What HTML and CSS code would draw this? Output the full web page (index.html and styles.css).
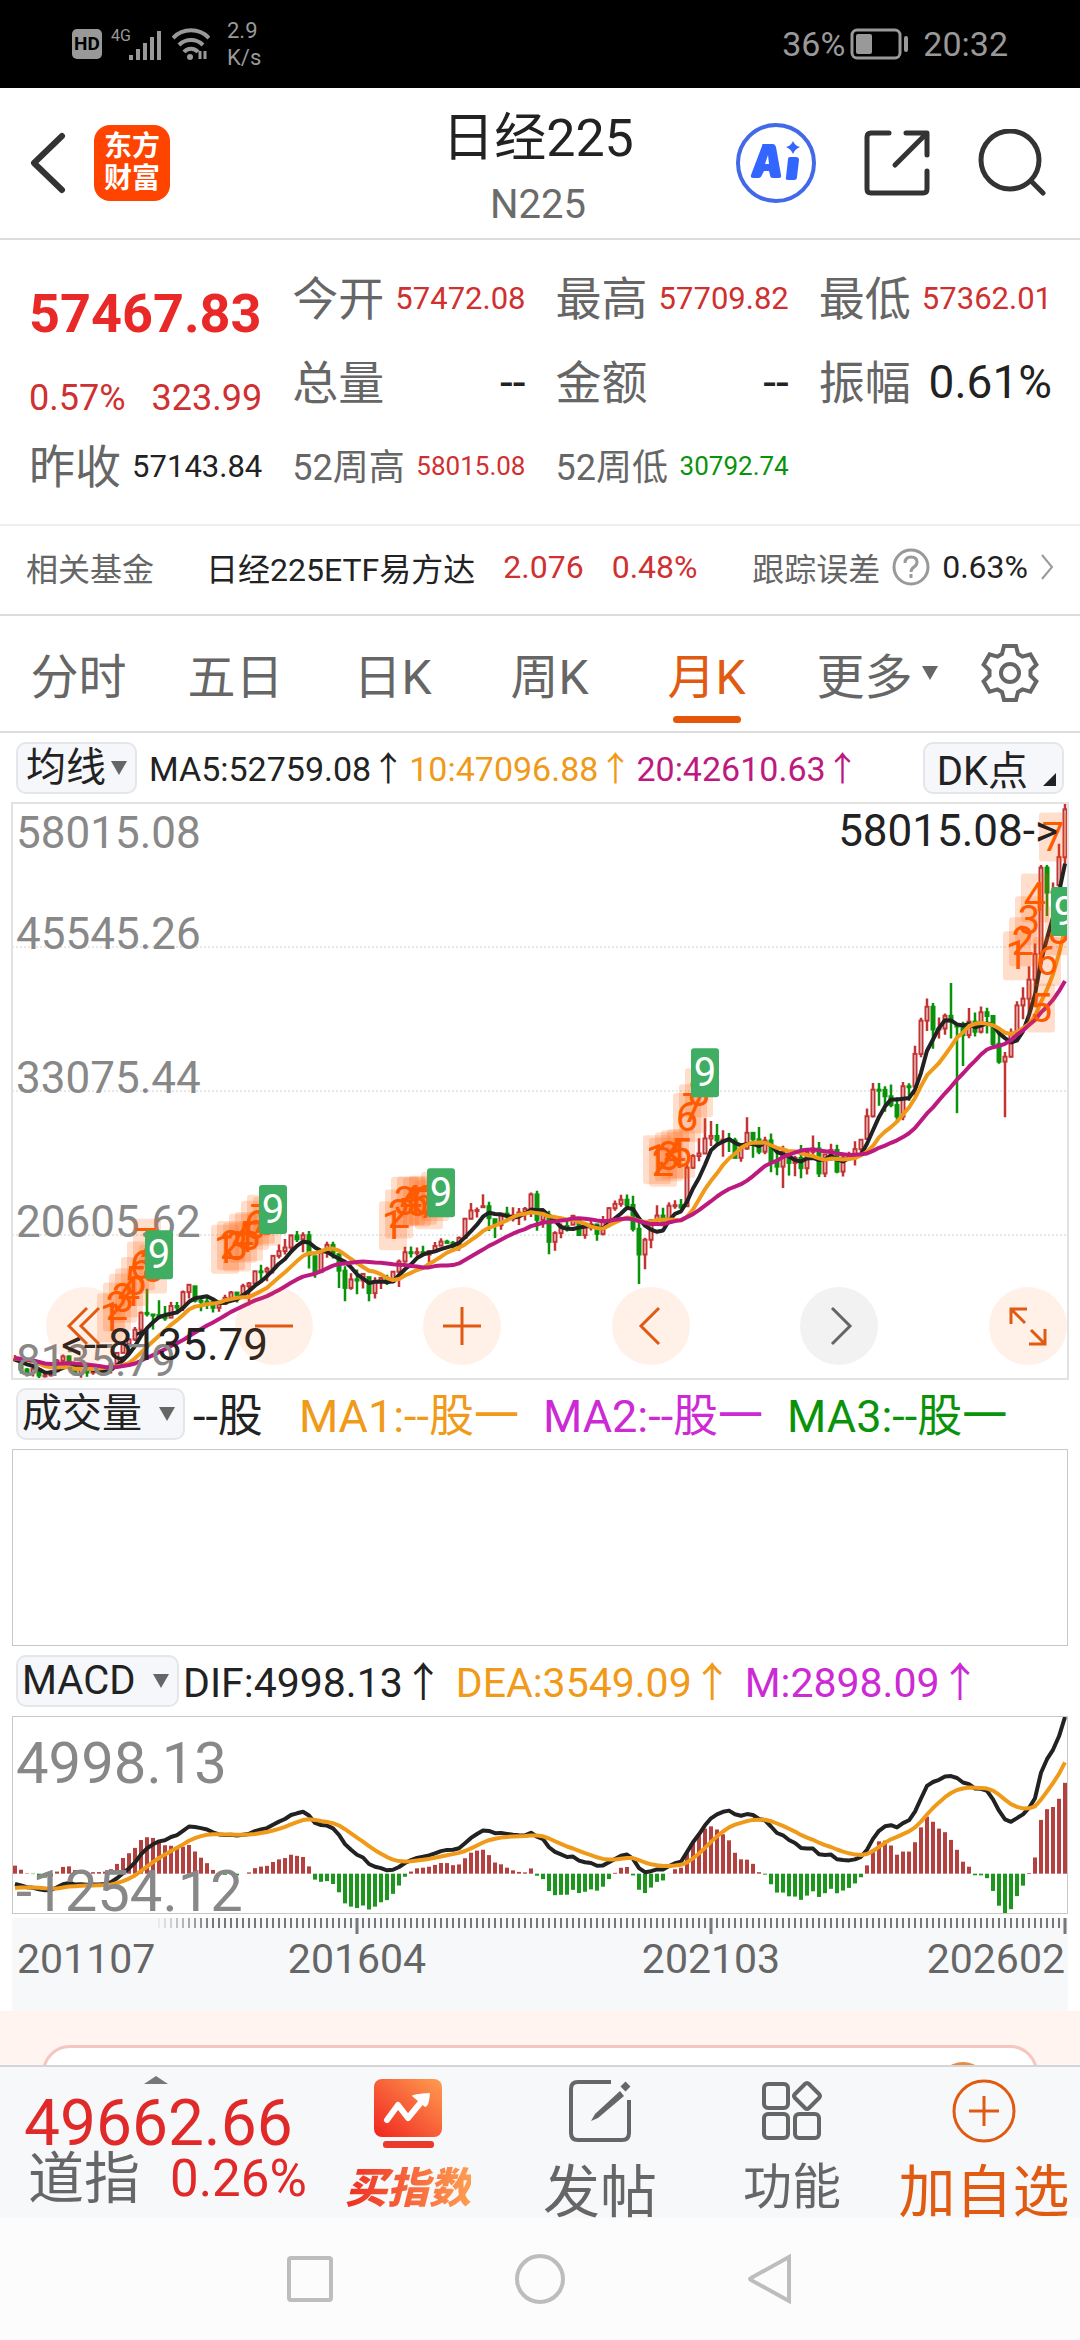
FILE: index.html
```html
<!DOCTYPE html>
<html lang="zh-CN">
<head>
    <meta charset="UTF-8">
    <meta name="viewport" content="width=device-width, initial-scale=1.0">
    <title>日经225</title>
    <link rel="stylesheet" href="styles.css">
</head>
<body>
    <div class="status-bar">
        <div class="status-left">
            <span class="hd">HD</span>
            <svg class="signal" width="52" height="34" viewBox="0 0 52 34">
                <text x="0" y="14" class="signal-text">4G</text>
                <path d="M20 28v5M27 22v11M34 16v17M41 10v23M48 4v29" stroke="#999" stroke-width="4"/>
            </svg>
            <svg width="38" height="34" viewBox="0 0 38 34" fill="none" stroke="#999" stroke-width="4">
                <path d="M1 11a25 25 0 0 1 36 0M7 18a17 17 0 0 1 24 0M12 25a9 9 0 0 1 14 0"/>
                <circle cx="18" cy="30" r="3" fill="#999" stroke="none"/>
                <path d="M28 24v8M33 24v8" stroke-width="3"/>
            </svg>
            <span class="speed">2.9<br>K/s</span>
        </div>
        <div class="status-right">
            <span>36%</span>
            <svg width="62" height="34" viewBox="0 0 62 34">
                <rect x="3" y="3" width="48" height="28" rx="5" fill="none" stroke="#999" stroke-width="3"/>
                <rect x="7" y="7" width="16" height="20" rx="2" fill="#999"/>
                <rect x="55" y="9" width="4" height="16" rx="2" fill="#999"/>
            </svg>
            <span>20:32</span>
        </div>
    </div>

    <header class="header">
        <div class="header-left">
            <button class="icon-btn" aria-label="返回">
                <svg width="36" height="62" viewBox="0 0 36 62" fill="none" stroke="#333" stroke-width="6" stroke-linecap="round" stroke-linejoin="round"><path d="M32 4L4 31l28 27"/></svg>
            </button>
            <div class="logo">东方<br>财富</div>
        </div>
        <div class="header-title">
            <h1>日经225</h1>
            <p>N225</p>
        </div>
        <div class="header-right">
            <button class="icon-btn" aria-label="AI">
                <svg width="80" height="80" viewBox="0 0 80 80">
                    <circle cx="40" cy="40" r="38" fill="none" stroke="#4169e8" stroke-width="4"/>
                    <path d="M27 21h10q2 0 3 3l5 28q1 3-2 3h-6q-3 0-3-3l-1-4h-5l-2 4q-1 3-3 3h-6q-3 0-2-3l11-29q0-2 1-2zM32 32l-3 9h4z" fill="#3366ff" fill-rule="evenodd"/>
                    <path d="M54 34h6q3 0 3 3l-2 17q0 3-3 3h-6q-3 0-2-3l2-18q0-2 2-2z" fill="#3366ff"/>
                    <path d="M57 18q2 5 7 6-5 2-7 7-2-5-7-7 5-1 7-6z" fill="#3366ff"/>
                </svg>
            </button>
            <button class="icon-btn" aria-label="分享">
                <svg width="66" height="66" viewBox="0 0 66 66" fill="none" stroke="#333" stroke-width="5" stroke-linecap="round" stroke-linejoin="round"><path d="M25 3H7q-4 0-4 4v52q0 4 4 4h52q4 0 4-4V41M42 3h21v22M62 4L31 35"/></svg>
            </button>
            <button class="icon-btn" aria-label="搜索">
                <svg width="68" height="68" viewBox="0 0 68 68" fill="none" stroke="#333" stroke-width="5" stroke-linecap="round"><circle cx="32" cy="31" r="29"/><path d="M54 53l11 11"/></svg>
            </button>
        </div>
    </header>

    <section class="quote">
        <div class="quote-price">
            <strong>57467.83</strong>
            <div class="quote-change"><span>0.57%</span><span>323.99</span></div>
        </div>
        <div class="cell"><span class="label">今开</span><span class="value up">57472.08</span></div>
        <div class="cell"><span class="label">最高</span><span class="value up">57709.82</span></div>
        <div class="cell"><span class="label">最低</span><span class="value up">57362.01</span></div>
        <div class="cell"><span class="label">总量</span><span class="value large">--</span></div>
        <div class="cell"><span class="label">金额</span><span class="value large">--</span></div>
        <div class="cell"><span class="label">振幅</span><span class="value large">0.61%</span></div>
        <div class="cell"><span class="label">昨收</span><span class="value">57143.84</span></div>
        <div class="cell"><span class="label small">52周高</span><span class="value small up">58015.08</span></div>
        <div class="cell"><span class="label small">52周低</span><span class="value small down">30792.74</span></div>
    </section>

    <a class="fund" href="#">
        <span class="fund-label">相关基金</span>
        <span class="fund-name">日经225ETF易方达</span>
        <span class="fund-price up">2.076</span>
        <span class="up">0.48%</span>
        <span class="fund-error">
            <span class="fund-label">跟踪误差</span>
            <svg width="38" height="38" viewBox="0 0 38 38" fill="none" stroke="#999" stroke-width="3"><circle cx="19" cy="19" r="17"/><path d="M13 15q0-6 6-6t6 5q0 3-3 5t-3 5"/><path d="M19 26v4"/></svg>
            <span>0.63%</span>
            <svg width="14" height="26" viewBox="0 0 14 26" fill="none" stroke="#999" stroke-width="2"><path d="M2 1l10 12L2 25"/></svg>
        </span>
    </a>

    <nav class="tabs">
        <button>分时</button>
        <button>五日</button>
        <button>日K</button>
        <button>周K</button>
        <button class="active">月K</button>
        <button class="more">更多<span class="caret"></span></button>
        <button class="settings" aria-label="设置">
            <svg width="60" height="60" viewBox="-30 -30 60 60" fill="none" stroke="#666" stroke-width="4">
                <path d="M-8-19L-6-27H6L8-19L12.5-16.4L20.4-18.7L26.4-8.3L20.5-2.6V2.6L26.4 8.3L20.4 18.7L12.5 16.4L8 19L6 27H-6L-8 19L-12.5 16.4L-20.4 18.7L-26.4 8.3L-20.5 2.6V-2.6L-26.4-8.3L-20.4-18.7L-12.5-16.4Z"/>
                <circle r="9"/>
            </svg>
        </button>
    </nav>

    <main>
        <div class="indicator">
            <label class="picker tight"><select aria-label="主图指标"><option>均线</option></select><span class="caret"></span></label>
            <div class="legend ma">
                <span>MA5:52759.08↑</span>
                <span class="orange">10:47096.88↑</span>
                <span class="magenta">20:42610.63↑</span>
            </div>
            <button class="dk">DK点<span class="corner"></span></button>
        </div>
        <div class="chart price-chart">
            <svg id="price" viewBox="0 0 1056 576"></svg>
            <div class="chart-buttons">
                <button aria-label="最早"><svg width="40" height="40" viewBox="0 0 40 40"><path d="M22 2L4 20l18 18M34 2L16 20l18 18"/></svg></button>
                <button aria-label="缩小"><svg width="40" height="40" viewBox="0 0 40 40"><path d="M1 20h38"/></svg></button>
                <button aria-label="放大"><svg width="40" height="40" viewBox="0 0 40 40"><path d="M1 20h38M20 1v38"/></svg></button>
                <button aria-label="左移"><svg width="40" height="40" viewBox="0 0 40 40"><path d="M28 2L10 20l18 18"/></svg></button>
                <button aria-label="右移" class="disabled"><svg width="40" height="40" viewBox="0 0 40 40"><path d="M13 2l18 18-18 18"/></svg></button>
                <button aria-label="全屏"><svg width="40" height="40" viewBox="0 0 40 40"><path d="M3 18V3h16M4 4l13 13M37 23v15H21M36 37L23 24"/></svg></button>
            </div>
        </div>

        <div class="indicator">
            <label class="picker"><select aria-label="副图一"><option>成交量</option></select><span class="caret"></span></label>
            <div class="legend vol">
                <span class="vol-now">--股</span>
                <span class="orange">MA1:--股一</span>
                <span class="purple">MA2:--股一</span>
                <span class="green">MA3:--股一</span>
            </div>
        </div>
        <div class="chart volume-chart"></div>

        <div class="indicator">
            <label class="picker"><select aria-label="副图二"><option>MACD</option></select><span class="caret"></span></label>
            <div class="legend macd">
                <span>DIF:4998.13↑</span>
                <span class="orange">DEA:3549.09↑</span>
                <span class="purple">M:2898.09↑</span>
            </div>
        </div>
        <div class="chart macd-chart">
            <svg id="macd" viewBox="0 0 1056 196"></svg>
        </div>
        <div class="timeline">
            <svg id="timeline" viewBox="0 0 1056 93"></svg>
        </div>
        <div class="promo"><div class="promo-card"><span class="promo-dot"></span></div></div>
    </main>

    <footer class="bottom-bar">
        <a class="index" href="#">
            <span class="index-caret"></span>
            <span class="index-price">49662.66</span>
            <span class="index-row"><span class="index-name">道指</span><span class="index-change">0.26%</span></span>
        </a>
        <button class="buy">
            <svg width="68" height="70" viewBox="0 0 68 70">
                <defs><linearGradient id="fire" x1="0" y1="1" x2="1" y2="0"><stop offset="0" stop-color="#f02420"/><stop offset="1" stop-color="#ff9d50"/></linearGradient></defs>
                <rect width="68" height="58" rx="8" fill="url(#fire)"/>
                <rect x="9" y="62" width="51" height="7" rx="3" fill="#e93a2c"/>
                <path d="M13 41l11-15 10 13 14-17" fill="none" stroke="#fff" stroke-width="6" stroke-linejoin="round" stroke-linecap="round"/>
                <path d="M38 17q0-2 18-3-1 14-5 14z" fill="#fff"/>
            </svg>
            <span>买指数</span>
        </button>
        <button class="post">
            <svg width="62" height="62" viewBox="0 0 62 62" fill="none" stroke="#666" stroke-width="4">
                <path d="M42 2H9Q2 2 2 9v44q0 7 7 7h44q7 0 7-7V20"/>
                <path d="M51 11L26 34l-4 7 7-3 26-22z" fill="#666" stroke="none"/>
                <path d="M54 9l5-5" stroke-width="7"/>
            </svg>
            <span>发帖</span>
        </button>
        <button class="tools">
            <svg width="60" height="60" viewBox="0 0 60 60" fill="none" stroke="#666" stroke-width="4">
                <rect x="2" y="3" width="24" height="24" rx="4"/><rect x="2" y="33" width="24" height="24" rx="4"/><rect x="33" y="33" width="24" height="24" rx="4"/>
                <path d="M43 3q2-2 4 0l10 10q2 2 0 4L47 27q-2 2-4 0L33 17q-2-2 0-4z"/>
            </svg>
            <span>功能</span>
        </button>
        <button class="add">
            <svg width="64" height="64" viewBox="0 0 64 64" fill="none" stroke="#e05a12" stroke-width="3"><circle cx="32" cy="32" r="30"/><path d="M17 32h30M32 17v30"/></svg>
            <span>加自选</span>
        </button>
    </footer>

    <div class="system-nav">
        <svg width="50" height="50" viewBox="0 0 50 50"><rect x="4" y="4" width="42" height="42" rx="2"/></svg>
        <svg width="50" height="50" viewBox="0 0 50 50"><circle cx="25" cy="25" r="23"/></svg>
        <svg width="50" height="50" viewBox="0 0 50 50"><path d="M44 3v44L6 26q-2-1 0-2z"/></svg>
    </div>

    <script src="script.js"></script>
</body>
</html>
```

FILE: styles.css
```css
* {
    margin: 0;
    padding: 0;
    box-sizing: border-box;
}

body {
    min-height: 100vh;
    display: flex;
    flex-direction: column;
    background: #fff;
    color: #222;
    font-family: Roboto, "Noto Sans CJK SC", sans-serif;
    overflow-x: hidden;
}

button,
select {
    border: none;
    background: none;
    font: inherit;
    color: inherit;
    cursor: pointer;
}

a {
    color: inherit;
    text-decoration: none;
}

svg {
    display: block;
    flex: none;
}

.up {
    color: #cf3030;
}

.down {
    color: #0a930a;
}

.orange {
    color: #f09a1a;
}

.magenta {
    color: #bd1a80;
}

.purple {
    color: #cc2ad4;
}

.green {
    color: #0a930a;
}

/* status bar */
.status-bar {
    display: flex;
    justify-content: space-between;
    align-items: center;
    height: 88px;
    padding: 0 72px;
    background: #000;
    color: #999;
    font-size: 34px;
}

.status-left,
.status-right {
    display: flex;
    align-items: center;
}

.status-left {
    gap: 9px;
}

.status-right svg {
    margin: 0 12px 0 4px;
}

.hd {
    width: 30px;
    border-radius: 5px;
    background: #999;
    color: #000;
    font-size: 19px;
    font-weight: bold;
    line-height: 30px;
    text-align: center;
}

.signal-text {
    fill: #999;
    font-size: 16px;
}

.speed {
    padding-left: 8px;
    font-size: 22px;
    line-height: 27px;
}

/* header */
.header {
    display: grid;
    grid-template-columns: 1fr auto 1fr;
    align-items: center;
    height: 152px;
    padding: 0 34px 0 30px;
    border-bottom: 2px solid #dcdcdc;
}

.header-left,
.header-right {
    display: flex;
    align-items: center;
}

.header-left {
    gap: 28px;
}

.header-right {
    justify-content: flex-end;
    gap: 48px;
}

.logo {
    width: 76px;
    height: 76px;
    padding-top: 6px;
    border-radius: 16px;
    background: #ff4400;
    color: #fff;
    font-size: 28px;
    font-weight: bold;
    line-height: 32px;
    text-align: center;
}

.header-title {
    padding-top: 12px;
    text-align: center;
}

.header-title h1 {
    margin-bottom: 12px;
    font-size: 52px;
    font-weight: normal;
    line-height: 60px;
}

.header-title p {
    color: #6b6b6b;
    font-size: 40px;
    line-height: 48px;
}

/* quote panel */
.quote {
    display: grid;
    grid-template-columns: repeat(4, 1fr);
    grid-auto-rows: 84px;
    column-gap: 30px;
    padding: 16px 28px 16px 29px;
}

.quote-price {
    grid-row: span 2;
    padding-top: 28px;
}

.quote-price strong {
    display: block;
    margin-bottom: 28px;
    color: #e92828;
    font-size: 54px;
    line-height: 60px;
}

.quote-change {
    display: flex;
    justify-content: space-between;
    color: #cf3030;
    font-size: 36px;
    line-height: 52px;
}

.cell {
    display: flex;
    justify-content: space-between;
    align-items: center;
    white-space: nowrap;
}

.label {
    padding-bottom: 6px;
    color: #666;
    font-size: 46px;
}

.label.small {
    padding-bottom: 4px;
    font-size: 36px;
}

.value {
    font-size: 31px;
}

.value.small {
    font-size: 26px;
}

.value.large {
    font-size: 46px;
}

/* related fund */
.fund {
    display: flex;
    align-items: center;
    height: 92px;
    padding: 0 26px 6px;
    border-top: 2px solid #eee;
    border-bottom: 2px solid #dcdcdc;
    font-size: 32px;
    white-space: nowrap;
}

.fund-label {
    color: #666;
}

.fund-name {
    margin-left: 52px;
}

.fund-price {
    margin: 0 28px;
}

.fund-error {
    display: flex;
    align-items: center;
    gap: 12px;
    margin-left: auto;
}

/* period tabs */
.tabs {
    display: flex;
    height: 117px;
    padding-right: 29px;
    border-bottom: 2px solid #dcdcdc;
    color: #666;
    font-size: 48px;
}

.tabs button {
    position: relative;
    flex: 157;
    padding-bottom: 2px;
    white-space: nowrap;
}

.tabs .more {
    display: flex;
    flex: 184;
    justify-content: center;
    align-items: center;
    gap: 9px;
}

.tabs .settings {
    display: flex;
    flex: 82;
    justify-content: center;
    align-items: center;
}

.tabs .active {
    color: #e05a12;
}

.tabs .active::after {
    content: "";
    position: absolute;
    left: 50%;
    bottom: 8px;
    width: 68px;
    height: 7px;
    margin-left: -34px;
    border-radius: 4px;
    background: #e6560a;
}

.caret {
    border: 8px solid transparent;
    border-top: 14px solid #666;
    border-bottom: none;
}

/* indicator rows */
.indicator {
    display: flex;
    align-items: center;
    height: 70px;
    padding: 0 16px;
    font-size: 40px;
}

.picker,
.dk {
    display: flex;
    align-items: center;
    height: 52px;
    border: 2px solid #e4e6ea;
    border-radius: 10px;
    background: #f6f7fa;
}

.picker {
    gap: 17px;
    padding: 0 8px 0 4px;
}

.picker.tight {
    gap: 5px;
    padding-left: 8px;
}

.picker select {
    appearance: none;
    line-height: 48px;
}

.legend {
    display: flex;
    padding-bottom: 4px;
    white-space: nowrap;
}

.ma {
    gap: 4px;
    padding-left: 12px;
    font-size: 34px;
}

.vol {
    gap: 24px;
    padding-left: 8px;
    font-size: 45px;
}

.vol-now {
    padding-right: 12px;
}

.macd {
    gap: 12px;
    padding-left: 4px;
    font-size: 41px;
}

.dk {
    position: relative;
    margin-left: auto;
    padding: 0 34px 0 12px;
}

.corner {
    position: absolute;
    right: 6px;
    bottom: 6px;
    border-left: 13px solid transparent;
    border-bottom: 13px solid #222;
}

/* charts */
.chart {
    margin: 0 12px;
    border: 1px solid #c8c8c8;
}

.chart svg,
.timeline svg {
    width: 100%;
}

.price-chart {
    position: relative;
    border: none;
    outline: 2px solid #e2e2e2;
    outline-offset: -1px;
}

.volume-chart {
    height: 197px;
}

.macd-chart {
    border-width: 1px 0;
    outline: 1px solid #c8c8c8;
    outline-offset: -1px;
}

.chart-buttons {
    position: absolute;
    right: 1px;
    bottom: 14px;
    left: 34px;
    display: flex;
    justify-content: space-between;
}

.chart-buttons button {
    display: flex;
    justify-content: center;
    align-items: center;
    width: 78px;
    height: 78px;
    border-radius: 50%;
    background: rgba(255, 90, 0, 0.09);
}

.chart-buttons button.disabled {
    background: #f2f2f2;
}

.chart-buttons svg {
    width: 40px;
    fill: none;
    stroke: #e05a12;
    stroke-width: 3;
}

.chart-buttons .disabled svg {
    stroke: #666;
}

.grid {
    stroke: #d0d0d0;
    stroke-dasharray: 2 2;
}

.axis {
    fill: #888;
    font-size: 44px;
}

.axis.big {
    font-size: 58px;
}

.note {
    fill: #222;
    font-size: 44px;
}

.line {
    fill: none;
    stroke-width: 4;
    stroke-linejoin: round;
}

.mark-box {
    fill: #ff5a00;
    fill-opacity: 0.2;
}

.mark-text {
    fill: #ff5a00;
    font-size: 40px;
    text-anchor: middle;
}

.mark-box.nine {
    fill: #3fae63;
    fill-opacity: 1;
}

.mark-text.nine {
    fill: #fff;
}

.timeline {
    margin: 4px 12px 0;
    background: #f7f8fa;
}

.date {
    fill: #666;
    font-size: 41px;
}

/* promo card under the chart */
.promo {
    height: 54px;
    padding: 34px 42px 0;
    background: #fff4ef;
    overflow: hidden;
}

.promo-card {
    position: relative;
    height: 120px;
    border: 3px solid #f5c6bd;
    border-radius: 28px;
    background: #fff;
}

.promo-dot {
    position: absolute;
    top: 14px;
    right: 46px;
    width: 52px;
    height: 52px;
    border-radius: 50%;
    background: #e88a4a;
}

/* bottom bar */
.bottom-bar {
    display: flex;
    height: 153px;
    border-top: 2px solid #d4d5d8;
    background: #f7f8fa;
    color: #666;
    overflow: hidden;
}

.index {
    position: relative;
    display: flex;
    flex: 288;
    flex-direction: column;
    padding: 27px 0 0 24px;
    color: #e02a2a;
    white-space: nowrap;
}

.index-caret {
    position: absolute;
    top: 9px;
    left: 50%;
    margin-left: -12px;
    border: 12px solid transparent;
    border-top: none;
    border-bottom: 8px solid #777;
}

.index-price {
    font-size: 64px;
    line-height: 60px;
}

.index-row {
    display: flex;
    align-items: center;
    gap: 30px;
    padding-left: 4px;
    font-size: 51px;
    line-height: 50px;
}

.index-name {
    color: #666;
    font-size: 56px;
}

.bottom-bar button {
    display: flex;
    flex: 192;
    flex-direction: column;
    align-items: center;
    padding-top: 12px;
    white-space: nowrap;
}

.bottom-bar svg {
    height: 64px;
}

.buy span {
    margin-top: 12px;
    background: linear-gradient(90deg, #ee2d24, #ff9d50);
    -webkit-background-clip: text;
    background-clip: text;
    color: transparent;
    font-size: 42px;
    font-style: italic;
    font-weight: 900;
    line-height: 56px;
}

.bottom-bar .buy svg {
    height: 70px;
}

.post span {
    margin-top: 20px;
    font-size: 57px;
    line-height: 60px;
}

.tools span {
    margin-top: 15px;
    font-size: 49px;
    line-height: 60px;
}

.add span {
    margin-top: 20px;
    color: #e05a12;
    font-size: 57px;
    line-height: 60px;
}

/* system navigation */
.system-nav {
    display: flex;
    flex: 1;
    justify-content: center;
    gap: 180px;
    min-height: 122px;
    padding-top: 36px;
    background: #fcfcfc;
}

.system-nav svg {
    fill: none;
    stroke: #bdbdbd;
    stroke-width: 4;
}
```

FILE: script.js
```js
// closes before the first visible month, only used to warm up the averages
const warmup = [
    17383, 17604, 17288, 17400, 17876, 18138, 17249, 16569, 16786, 16738, 15681, 15308,
    13592, 13603, 12526, 13850, 14338, 13481, 13377, 13073, 11260, 8577, 8512, 8860,
    7994, 7568, 8110, 8828, 9523, 9958, 10357, 10493, 10133, 10035, 9346, 10546,
    10198, 10126, 11090, 11057, 9769, 9383, 9537, 8824, 9369, 9202, 9937, 10229,
    10238, 10624, 9755, 9850, 9694, 9816
];

// [close, high, low] per month, 2011-07 to 2026-02
const months = [
    [9833, 10207, 9824], [8955, 10040, 8619], [8700, 9098, 8359], [8988, 9152, 8343], [8435, 9053, 8135.79], [8455, 8729, 8272],
    [8803, 8911, 8349], [9723, 9867, 8780], [10084, 10255, 9509], [9521, 10190, 9388], [8543, 9522, 8497], [9007, 9042, 8238],
    [8695, 9136, 8328], [8840, 9222, 8513], [8870, 9288, 8646], [8928, 9075, 8488], [9446, 9493, 8619], [10395, 10433, 9386],
    [11139, 11186, 10398], [11559, 11662, 10952], [12398, 12635, 11433], [13861, 13983, 11805], [13775, 15942, 13555], [13677, 13724, 12415],
    [13668, 14953, 13562], [13389, 14466, 13188], [14456, 14817, 13448], [14328, 14799, 13748], [15662, 15794, 14026], [16291, 16320, 15112],
    [14915, 16164, 14764], [14841, 15094, 13995], [14828, 15312, 14203], [14304, 15164, 13885], [14632, 14744, 13964], [15162, 15442, 14611],
    [15621, 15759, 15101], [15425, 15628, 14753], [16174, 16374, 15356], [16414, 16533, 14529], [17460, 17520, 16374], [17451, 18030, 16672],
    [17674, 17850, 16592], [18798, 18865, 17271], [19207, 19778, 18577], [19520, 20252, 18927], [20563, 20655, 19257], [20236, 20952, 19990],
    [20585, 20850, 19115], [18890, 20946, 17714], [17388, 18770, 16901], [19083, 19202, 17389], [19747, 20012, 18641], [19034, 20012, 18562],
    [17518, 18951, 16017], [16027, 17905, 14865], [16759, 17291, 15857], [16666, 17613, 15471], [17235, 17251, 15975], [15576, 16955, 14864],
    [16569, 16938, 15106], [16887, 16943, 15921], [16450, 17156, 16285], [17425, 17461, 16554], [18308, 18482, 16111], [19114, 19592, 18227],
    [19041, 19615, 18650], [19119, 19519, 18805], [18909, 19668, 18883], [19197, 19289, 18224], [19651, 19998, 19144], [20033, 20318, 19686],
    [19925, 20200, 19856], [19646, 20085, 19280], [20356, 20481, 19239], [22012, 22086, 20363], [22725, 23382, 21972], [22765, 22994, 22119],
    [23098, 24129, 23065], [22068, 23492, 20950], [21454, 21971, 20347], [22468, 22495, 21056], [22202, 23050, 21931], [22305, 23011, 21785],
    [22554, 22949, 21462], [22865, 23032, 21851], [24120, 24286, 22172], [21920, 24448, 20971], [22351, 22583, 21243], [20015, 22698, 18948],
    [20773, 20929, 19241], [21385, 21610, 20315], [21206, 21860, 20911], [22259, 22362, 21500], [20601, 21875, 20581], [21276, 21497, 20289],
    [21522, 21823, 20993], [20704, 21556, 20110], [21756, 22255, 20554], [22927, 23008, 21276], [23294, 23591, 22705], [23657, 24091, 23044],
    [23205, 24115, 22892], [21143, 23995, 20916], [18917, 21719, 16358], [20194, 20365, 17646], [21878, 21955, 19448], [22288, 23185, 21529],
    [21710, 22965, 21710], [23140, 23431, 21919], [23185, 23622, 22878], [22977, 23725, 22948], [26434, 26834, 23096], [27444, 27602, 26327],
    [27663, 28979, 27002], [28966, 30714, 27649], [29179, 30485, 28308], [28813, 30208, 28419], [28860, 29685, 27385], [28792, 29441, 27795],
    [27284, 29035, 27272], [28090, 28279, 26954], [29453, 30795, 27987], [28893, 29489, 27293], [27822, 29960, 27594], [28792, 29121, 27588],
    [27002, 29388, 26044], [26527, 27880, 25775], [27821, 28338, 24681], [26848, 27821, 25748], [27280, 27463, 25688], [26393, 28389, 25520],
    [27802, 28015, 25841], [28092, 29222, 27530], [25937, 28659, 25621], [27587, 27587, 25621], [27969, 28502, 27032], [26095, 28423, 25953],
    [27327, 27599, 25661], [27446, 27821, 27046], [28041, 28734, 26632], [28856, 28879, 27427], [30888, 31560, 28931], [33189, 33772, 30785],
    [33172, 33762, 31791], [32619, 33488, 31275], [31858, 33634, 31674], [30859, 32533, 30487], [33487, 33853, 30538], [33464, 33755, 32205],
    [36287, 36984, 32693], [39166, 39426, 36003], [40369, 41087, 38271], [38406, 40697, 36733], [38488, 39437, 37617], [39583, 39788, 37950],
    [39102, 42426, 37611], [38648, 38828, 31156], [37920, 39081, 35247], [39081, 40257, 37651], [38208, 39884, 37801], [39895, 40398, 38055],
    [39572, 40288, 38055], [37156, 39581, 36840], [35618, 38220, 35440], [36045, 36452, 30792.74], [37965, 38494, 35987], [40487, 40852, 37300],
    [41070, 42065, 39288], [42718, 43876, 39800], [44933, 45852, 41835], [52411, 52636, 44200], [50254, 52636, 48235], [50339, 51127, 48600],
    [53323, 54487, 50900], [57467.83, 58015.08, 52560]
];

const RED = '#c23434';
const GREEN = '#0a930a';
const STEP = 6;
const closes = warmup.concat(months.map(m => m[0]));
const offset = warmup.length;

const xAt = i => i * STEP + 3;
const priceY = p => (58015.08 - p) / (58015.08 - 8135.79) * 576;
const macdY = v => (4998.13 - v) / (4998.13 + 1254.12) * 196;

function average(n) {
    return months.map((m, i) => {
        const part = closes.slice(offset + i - n + 1, offset + i + 1);
        return part.reduce((a, b) => a + b, 0) / n;
    });
}

function ema(values, n) {
    let last = values[0];
    return values.map(v => last = (last * (n - 1) + v * 2) / (n + 1));
}

function polyline(values, toY, color) {
    const points = values.map((v, i) => `${xAt(i)},${toY(v).toFixed(1)}`).join(' ');
    return `<polyline class="line" stroke="${color}" points="${points}"/>`;
}

function drawPrice() {
    let out = '';
    for (let i = 1; i < 4; i++) {
        out += `<path class="grid" d="M0 ${i * 144}H1056"/>`;
    }

    months.forEach(([close, high, low], i) => {
        const open = closes[offset + i - 1];
        const up = close >= open;
        const color = up ? RED : GREEN;
        const x = xAt(i);
        const top = priceY(Math.min(Math.max(open, close), high));
        const bottom = priceY(Math.max(Math.min(open, close), low));
        out += `<path d="M${x} ${priceY(high)}V${top}M${x} ${bottom}V${priceY(low)}" stroke="${color}" stroke-width="2.5"/>`;
        out += `<rect x="${x - 1.5}" y="${top}" width="3" height="${Math.max(bottom - top, 1)}" fill="${up ? '#fff' : color}" stroke="${color}" stroke-width="2"/>`;
    });

    out += polyline(average(5), priceY, '#222');
    out += polyline(average(10), priceY, '#f09a1a');
    out += polyline(average(20), priceY, '#bd1a80');

    ['45545.26', '33075.44', '20605.62'].forEach((label, i) => {
        out += `<text class="axis" x="4" y="${(i + 1) * 144 + 2}">${label}</text>`;
    });
    out += '<text class="axis" x="4" y="45">58015.08</text>';
    out += '<text class="axis" x="4" y="573">8135.79</text>';

    // nine-count marks: index of the month holding "1"
    [16, 35, 63, 107, 167].forEach(start => {
        for (let n = 1; n <= 9; n++) {
            const i = start + n - 1;
            const below = start === 167 && n > 4 && n !== 7;
            const y = below ? priceY(months[i][2]) + 21 : priceY(months[i][1]) - 70;
            const nine = n === 9 ? ' nine' : '';
            out += `<rect class="mark-box${nine}" x="${xAt(i) - 14}" y="${y}" width="28" height="49" rx="3"/>`;
            out += `<text class="mark-text${nine}" x="${xAt(i)}" y="${y + 38}">${n}</text>`;
        }
    });

    out += '<text class="note" x="1046" y="43" text-anchor="end">58015.08-&gt;</text>';
    out += '<text class="note" x="256" y="557" text-anchor="end">&lt;--8135.79</text>';
    document.getElementById('price').innerHTML = out;
}

function drawMacd() {
    const fast = ema(closes, 12);
    const slow = ema(closes, 26);
    const dif = fast.map((v, i) => v - slow[i]);
    const dea = ema(dif, 9);
    const zero = macdY(0);
    let out = '';

    months.forEach((m, i) => {
        const v = 2 * (dif[offset + i] - dea[offset + i]);
        const y = macdY(v);
        out += `<rect x="${xAt(i) - 2}" y="${Math.min(y, zero)}" width="4" height="${Math.abs(y - zero)}" fill="${v > 0 ? '#b54040' : '#1c961c'}"/>`;
    });
    out += polyline(dif.slice(offset), macdY, '#222');
    out += polyline(dea.slice(offset), macdY, '#f09a1a');
    out += '<text class="axis big" x="4" y="66">4998.13</text>';
    out += '<text class="axis big" x="4" y="194">-1254.12</text>';
    document.getElementById('macd').innerHTML = out;
}

function drawTimeline() {
    let out = '';
    for (let i = 24; i < months.length; i++) {
        const major = i === 57 || i === 116 || i === 175;
        out += `<path d="M${xAt(i)} 0V${major ? 16 : 10}" stroke="#777" stroke-width="${major ? 3 : 2}" opacity="${Math.min(1, (i - 23) / 10)}"/>`;
    }
    out += '<text class="date" x="5" y="55">201107</text>';
    out += '<text class="date" x="345" y="55" text-anchor="middle">201604</text>';
    out += '<text class="date" x="699" y="55" text-anchor="middle">202103</text>';
    out += '<text class="date" x="1053" y="55" text-anchor="end">202602</text>';
    document.getElementById('timeline').innerHTML = out;
}

drawPrice();
drawMacd();
drawTimeline();
```
